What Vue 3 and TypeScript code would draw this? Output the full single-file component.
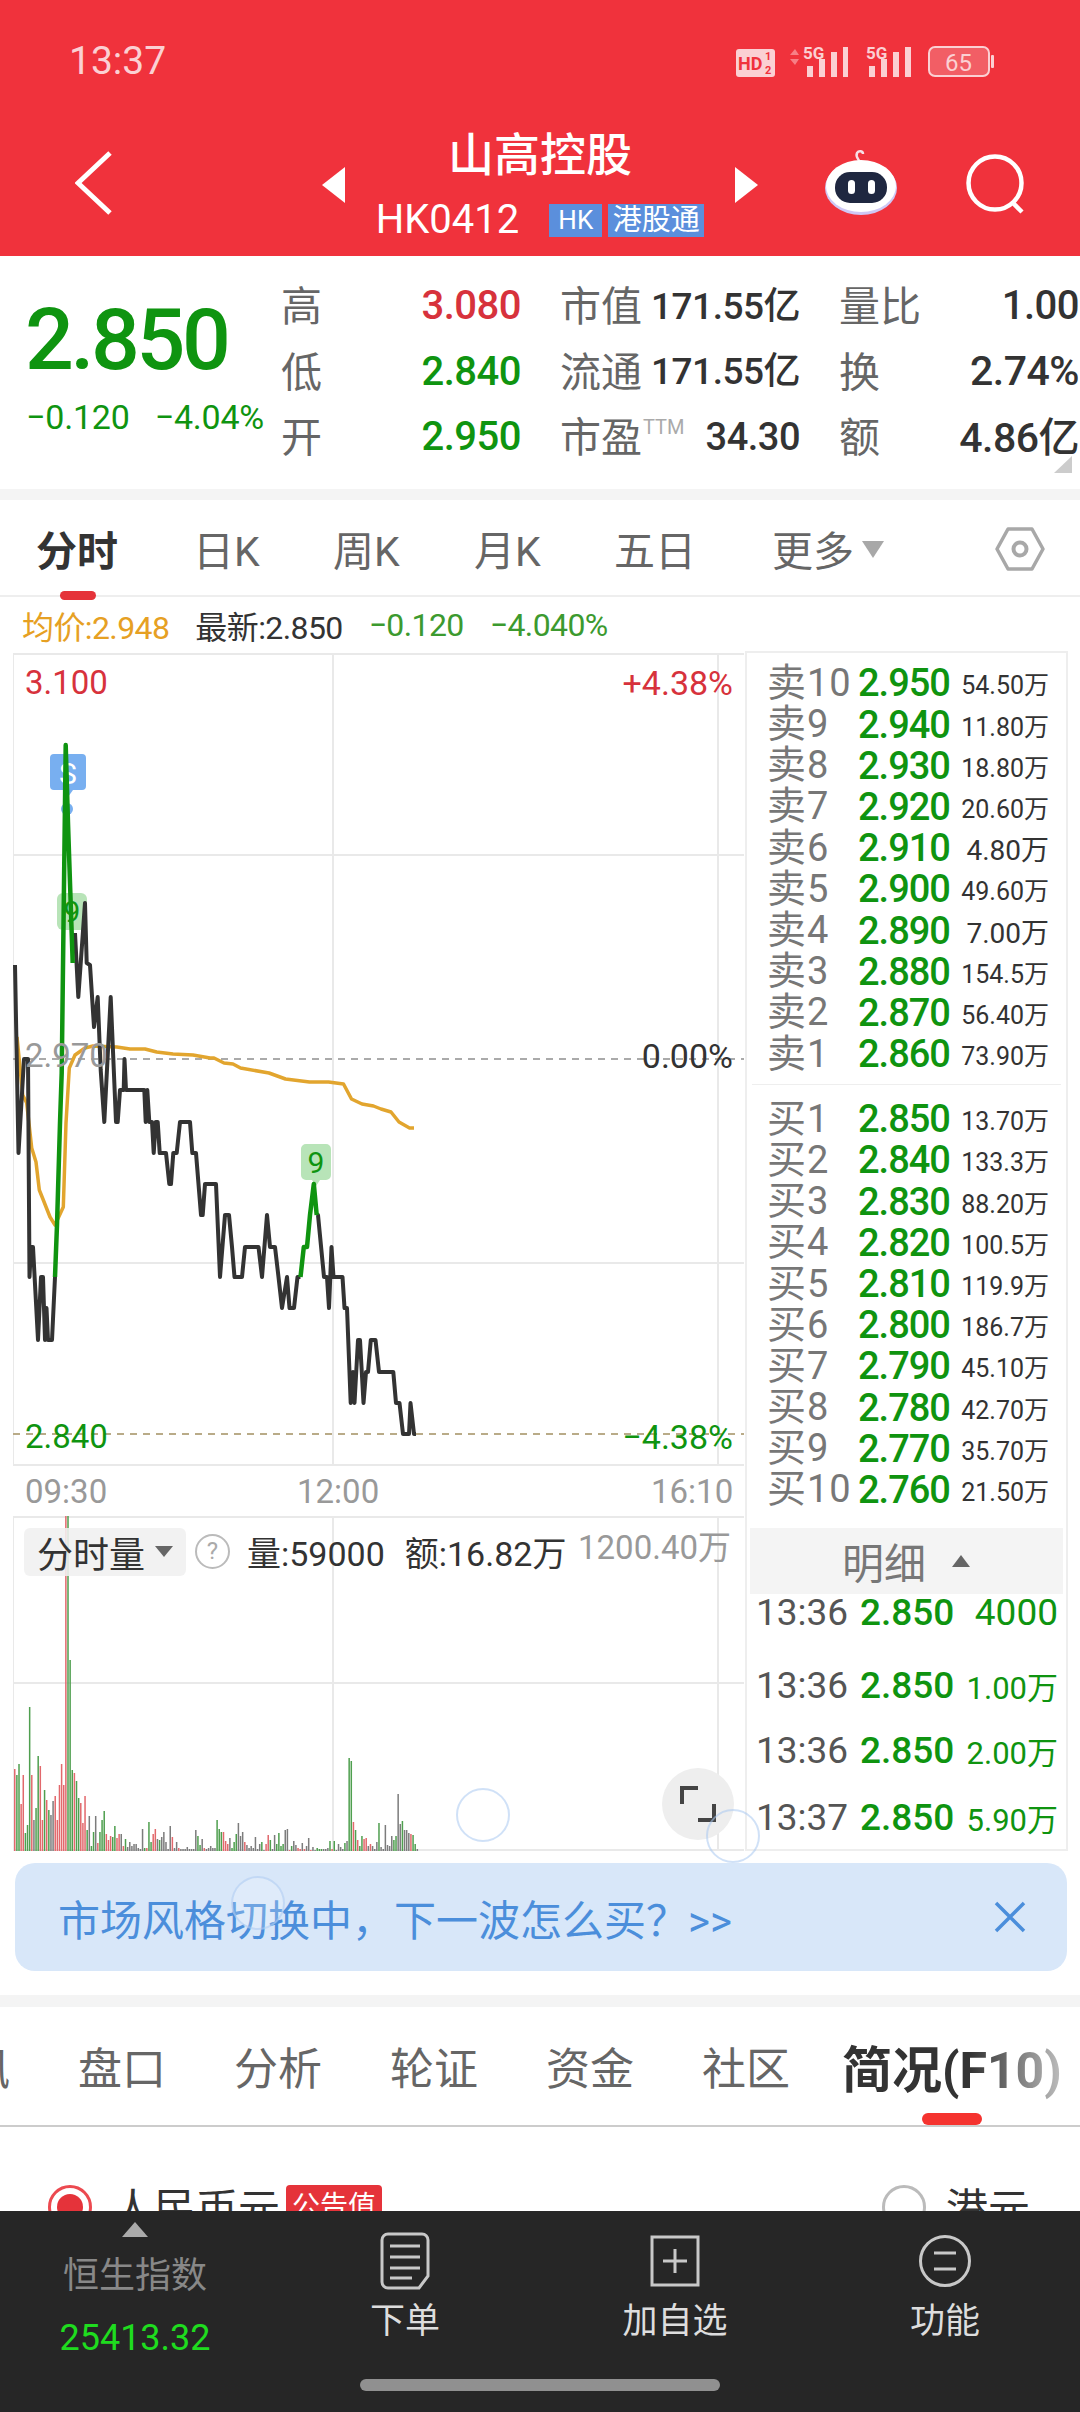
<template>
  <div class="app">
    <header class="top">
      <div class="status">
        <span class="clock">13:37</span>
        <svg class="status-icons" width="260" height="36" viewBox="736 44 260 36">
          <rect x="737" y="50" width="39" height="28" rx="3" fill="#fbd0d3" />
          <text x="739" y="71" class="hd">HD</text>
          <text x="766" y="61" class="hd-sub">1</text>
          <text x="766" y="75" class="hd-sub">2</text>
          <path d="M791 56l5-6 4 6zM791 60l5 6 4-6z" fill="#f77f86" />
          <text x="804" y="60" class="five">5G</text>
          <path d="M808 67h6v11h-6zM820 60h6v18h-6zM832 53h6v25h-6zM844 48h5v30h-5z" fill="#fbd0d3" />
          <text x="867" y="60" class="five">5G</text>
          <path d="M870 67h6v11h-6zM882 60h6v18h-6zM894 53h6v25h-6zM906 48h6v30h-6z" fill="#fbd0d3" />
          <rect x="930" y="48" width="60" height="29" rx="6" fill="#f25e65" stroke="#fbd0d3" stroke-width="2" />
          <text x="946" y="72" class="batt">65</text>
          <rect x="992" y="56" width="3" height="13" rx="1" fill="#fbd0d3" />
        </svg>
      </div>
      <nav class="nav">
        <div class="nav-left">
          <svg width="40" height="66" viewBox="0 0 40 66">
            <path d="M35 3L3 33l32 30" fill="none" stroke="#fff" stroke-width="5" />
          </svg>
        </div>
        <div class="nav-center">
          <i class="arrow-left"></i>
          <div class="name">
            <div class="title">山高控股</div>
            <div class="code">
              <span class="code-text">HK0412</span>
              <span class="tag tag-hk">HK</span>
              <span class="tag tag-gg">港股通</span>
            </div>
          </div>
          <i class="arrow-right"></i>
        </div>
        <div class="nav-right">
          <svg class="robot" width="72" height="68" viewBox="0 0 72 68">
            <path d="M35 15c-1-4-5-6-3-10 2-3 6-2 6 1" fill="none" stroke="#f6dfe6" stroke-width="2.5" />
            <ellipse cx="36" cy="40" rx="36" ry="27" fill="#cfc8f5" />
            <ellipse cx="36" cy="38" rx="35" ry="26" fill="#fff" />
            <rect x="10" y="24" width="52" height="31" rx="15" fill="#1f2740" />
            <rect x="23" y="32" width="7" height="14" rx="3.5" fill="#fff" />
            <rect x="43" y="32" width="7" height="14" rx="3.5" fill="#fff" />
          </svg>
          <svg class="search" width="62" height="60" viewBox="0 0 62 60">
            <circle cx="29" cy="29" r="26.5" fill="none" stroke="#fff" stroke-width="4.5" />
            <path d="M46 48l10 10" fill="none" stroke="#fff" stroke-width="4.5" />
          </svg>
        </div>
      </nav>
    </header>

    <section class="quote">
      <div class="quote-main">
        <div class="last-price">2.850</div>
        <div class="change"><span>−0.120</span><span>−4.04%</span></div>
      </div>
      <div class="quote-grid">
        <div v-for="item in quoteItems" :key="item.label" class="cell">
          <span class="cell-label">{{ item.label }}<sup v-if="item.ttm">TTM</sup></span>
          <span class="cell-value" :class="[item.tone, item.size]">{{ item.value }}</span>
        </div>
      </div>
      <i class="corner"></i>
    </section>

    <div class="tabs">
      <span v-for="tab in chartTabs" :key="tab.name" class="tab" :class="{ on: tab.name === '分时' }" :style="{ width: tab.width + 'px' }">{{ tab.name }}</span>
      <span class="tab more">更多<i class="more-caret"></i></span>
      <svg class="gear" width="52" height="48" viewBox="0 0 52 48">
        <path d="M3 24L14 4h24l11 20-11 20H14z" fill="none" stroke="#a8a8a8" stroke-width="3.5" stroke-linejoin="round" />
        <circle cx="26" cy="24" r="6.5" fill="none" stroke="#a8a8a8" stroke-width="4" />
      </svg>
    </div>

    <div class="legend">
      <span class="orange">均价:2.948</span>
      <span class="dark">最新:2.850</span>
      <span class="soft-green">−0.120</span>
      <span class="soft-green">−4.040%</span>
    </div>

    <main class="board">
      <div class="chart-col">
        <div class="price-chart">
          <svg class="layer" width="731" height="813" viewBox="13 653 731 813">
            <path d="M13 653V1466M333 653V1466M718 653V1466" class="grid-thin" />
            <path d="M13 654H744M13 855H744M13 1263H744M13 1465H744" class="grid" />
            <path d="M13 1059H744" class="dash-gray" />
            <path d="M13 1434H744" class="dash-tan" />
            <path d="M50 758a4 4 0 0 1 4-4h28a4 4 0 0 1 4 4v28a4 4 0 0 1-4 4H73l-5 7-5-7H54a4 4 0 0 1-4-4z" fill="#78aff0" />
            <circle cx="67" cy="809" r="6" fill="#78aff0" />
            <text x="68" y="784" class="mark white">S</text>
            <rect x="57" y="893" width="30" height="37" rx="6" fill="#b8e4b8" />
            <text x="72" y="922" class="mark green-fill">9</text>
            <path d="M301 1149a5 5 0 0 1 5-5h20a5 5 0 0 1 5 5v26a5 5 0 0 1-5 5h-6l-4 6-4-6h-6a5 5 0 0 1-5-5z" fill="#b8e4b8" />
            <text x="316" y="1173" class="mark green-fill">9</text>
            <polyline :points="avgLine" class="line-avg" />
            <polyline :points="blackA" class="line-dark" />
            <polyline :points="blackB" class="line-dark" />
            <polyline :points="blackC" class="line-dark" />
            <polyline :points="greenA" class="line-green" />
            <polyline :points="greenB" class="line-green" />
          </svg>
          <span class="axis left red-text at-top">3.100</span>
          <span class="axis right red-text at-top">+4.38%</span>
          <span class="axis left gray-text at-mid">2.970</span>
          <span class="axis right dark-text at-mid">0.00%</span>
          <span class="axis left green-text at-low">2.840</span>
          <span class="axis right green-text at-low">−4.38%</span>
        </div>
        <div class="time-axis"><span>09:30</span><span>12:00</span><span>16:10</span></div>
        <div class="volume-chart">
          <svg class="layer" width="731" height="335" viewBox="13 1516 731 335">
            <path d="M13 1516V1851M333 1516V1851M718 1516V1851" class="grid-thin" />
            <path d="M13 1517H744M13 1683H744M13 1850H744" class="grid" />
            <rect v-for="bar in bars" :key="bar.x" :x="bar.x" :y="1851 - bar.h" width="1.5" :height="bar.h" :fill="bar.fill" />
          </svg>
          <div class="vol-head">
            <span class="vol-select">分时量<i class="vol-caret"></i></span>
            <span class="help">?</span>
            <span class="vol-stat">量:59000</span>
            <span class="vol-stat">额:16.82万</span>
            <span class="vol-max">1200.40万</span>
          </div>
          <div class="expand">
            <svg width="36" height="36" viewBox="0 0 36 36">
              <path d="M2 18V2h16M34 18v16H18" fill="none" stroke="#444" stroke-width="4" />
            </svg>
          </div>
        </div>
      </div>

      <aside class="depth">
        <div class="levels">
          <div v-for="row in asks" :key="row.label" class="level">
            <span class="level-name">{{ row.side }}<b>{{ row.no }}</b></span>
            <span class="level-price">{{ row.price }}</span>
            <span class="level-vol" :class="{ wide: row.vol.length < 6 }">{{ row.vol }}</span>
          </div>
        </div>
        <div class="depth-line"></div>
        <div class="levels">
          <div v-for="row in bids" :key="row.label" class="level">
            <span class="level-name">{{ row.side }}<b>{{ row.no }}</b></span>
            <span class="level-price">{{ row.price }}</span>
            <span class="level-vol" :class="{ wide: row.vol.length < 6 }">{{ row.vol }}</span>
          </div>
        </div>
        <div class="detail-head">明细<i class="detail-caret"></i></div>
        <div class="tick-list">
          <div v-for="(tick, i) in ticks" :key="i" class="tick">
            <span class="tick-time">{{ tick.time }}</span>
            <span class="tick-price">{{ tick.price }}</span>
            <span class="tick-vol" :class="{ small: tick.vol.endsWith('万') }">{{ tick.vol }}</span>
          </div>
        </div>
      </aside>
    </main>

    <div class="banner">
      <span>市场风格切换中，下一波怎么买？&gt;&gt;</span>
      <svg width="32" height="32" viewBox="0 0 32 32">
        <path d="M2 2l28 28M30 2L2 30" fill="none" stroke="#4b8edb" stroke-width="3.5" />
      </svg>
    </div>

    <div class="strip"></div>

    <div class="info-tabs">
      <span class="info-cut">讯</span>
      <span v-for="name in infoTabs" :key="name" class="info-tab">{{ name }}</span>
      <span class="info-active">简况(F10)</span>
      <i class="info-fade"></i>
      <i class="info-mark"></i>
    </div>

    <div class="currency">
      <div class="currency-item">
        <i class="radio radio-on"></i>
        <span>人民币元</span>
        <em>公告值</em>
      </div>
      <div class="currency-item">
        <i class="radio"></i>
        <span>港元</span>
      </div>
    </div>

    <footer class="footer">
      <div class="index">
        <i class="index-caret"></i>
        <div class="index-name">恒生指数</div>
        <div class="index-value">25413.32</div>
      </div>
      <div class="action">
        <svg width="50" height="58" viewBox="0 0 50 58">
          <path d="M8 2h34a6 6 0 0 1 6 6v36l-9 12H8a6 6 0 0 1-6-6V8a6 6 0 0 1 6-6z" fill="none" stroke="#c8c8c8" stroke-width="3" />
          <path d="M10 14h30M10 25h30M10 36h30M10 46h22" stroke="#c8c8c8" stroke-width="3" />
        </svg>
        <span>下单</span>
      </div>
      <div class="action">
        <svg width="50" height="58" viewBox="0 0 50 58">
          <rect x="2" y="5" width="46" height="48" fill="none" stroke="#c8c8c8" stroke-width="3" />
          <path d="M25 17v24M13 29h24" stroke="#c8c8c8" stroke-width="3" />
        </svg>
        <span>加自选</span>
      </div>
      <div class="action">
        <svg width="52" height="58" viewBox="0 0 52 58">
          <circle cx="26" cy="29" r="24.5" fill="none" stroke="#c8c8c8" stroke-width="3" />
          <path d="M15 21h22M15 37h22" stroke="#c8c8c8" stroke-width="3" />
        </svg>
        <span>功能</span>
      </div>
      <i class="home-bar"></i>
    </footer>

    <i class="touch touch-a"></i>
    <i class="touch touch-b"></i>
    <i class="touch touch-c"></i>
  </div>
</template>

<script setup lang="ts">
const quoteItems = [
  { label: '高', value: '3.080', tone: 'red-text', size: 'mid' },
  { label: '市值', value: '171.55亿', tone: 'dark-text', size: 'tight raised' },
  { label: '量比', value: '1.00', tone: 'dark-text', size: 'mid' },
  { label: '低', value: '2.840', tone: 'green-text', size: 'mid' },
  { label: '流通', value: '171.55亿', tone: 'dark-text', size: 'tight raised' },
  { label: '换', value: '2.74%', tone: 'dark-text', size: 'big' },
  { label: '开', value: '2.950', tone: 'green-text', size: 'mid' },
  { label: '市盈', value: '34.30', tone: 'dark-text', size: '', ttm: true },
  { label: '额', value: '4.86亿', tone: 'dark-text', size: 'big raised' },
]

const chartTabs = [
  { name: '分时', width: 157 },
  { name: '日K', width: 140 },
  { name: '周K', width: 141 },
  { name: '月K', width: 140 },
  { name: '五日', width: 158 },
]

const infoTabs = ['盘口', '分析', '轮证', '资金', '社区']

const makeLevels = (side: string, rows: string[][]) =>
  rows.map(([no, price, vol]) => ({ label: side + no, side, no, price, vol }))

const asks = makeLevels('卖', [
  ['10', '2.950', '54.50万'],
  ['9', '2.940', '11.80万'],
  ['8', '2.930', '18.80万'],
  ['7', '2.920', '20.60万'],
  ['6', '2.910', '4.80万'],
  ['5', '2.900', '49.60万'],
  ['4', '2.890', '7.00万'],
  ['3', '2.880', '154.5万'],
  ['2', '2.870', '56.40万'],
  ['1', '2.860', '73.90万'],
])

const bids = makeLevels('买', [
  ['1', '2.850', '13.70万'],
  ['2', '2.840', '133.3万'],
  ['3', '2.830', '88.20万'],
  ['4', '2.820', '100.5万'],
  ['5', '2.810', '119.9万'],
  ['6', '2.800', '186.7万'],
  ['7', '2.790', '45.10万'],
  ['8', '2.780', '42.70万'],
  ['9', '2.770', '35.70万'],
  ['10', '2.760', '21.50万'],
])

const ticks = [
  { time: '13:36', price: '2.850', vol: '4000' },
  { time: '13:36', price: '2.850', vol: '1.00万' },
  { time: '13:36', price: '2.850', vol: '2.00万' },
  { time: '13:37', price: '2.850', vol: '5.90万' },
]

// line data, read off the screenshot in page pixels
const blackA = '15,965 18.5,1153 24,1059 28,1059 29.5,1277 31,1247 33,1247 38,1340 41,1277 43,1277 45,1340 46.5,1308 48,1340 52,1340 55,1277'
const greenA = '55,1277 57,1225 60,1123 61.7,1073 65.7,745 68,823 72.7,963'
const blackB = '75,933 78.3,997 85,903 86.7,963 90,965 94,1027 97.7,997 100.7,1070 104.3,1122 110.7,997 116,1122 117.7,1122 120,1090 123.7,1090 124.5,1059 126,1090 144.3,1090 145.7,1122 147.3,1090 149.3,1122 152,1122 153.7,1153 155.7,1122 157.7,1122 159.7,1153 166,1153 169.3,1184 171,1184 173.3,1153 176.7,1153 180,1122 190,1122 192.3,1153 196,1153 201,1215 202.7,1215 205,1184 216,1184 220,1277 225,1215 229,1215 232,1247 234.5,1277 242,1277 245,1247 258.5,1247 262,1277 267,1215 270,1247 275,1247 278.5,1277 282,1308 287,1277 289.5,1308 294,1308 297.5,1277 300.5,1277'
const greenB = '300.5,1277 303.8,1247 307,1247 310,1215 313.8,1184 316.7,1215'
const blackC = '316.7,1215 318,1215 324,1277 327,1277 329,1308 331.5,1247 333.5,1277 342.5,1277 344.5,1308 347,1308 350.7,1403 353,1372 354.5,1403 358,1340 360,1340 363.5,1403 366,1372 368,1372 370.8,1340 375.5,1340 379,1372 393.3,1372 396,1403 399.5,1403 403,1434 409,1434 410.5,1403 414,1434 416,1434'
const avgLine = '17,1037 22.7,1095 26.7,1103 31.7,1148 36,1162 39.3,1190 43.3,1200 50,1217 55,1225 63.3,1207 66,1123 69.3,1068 75,1055 85,1048 93,1046 116.7,1047 130,1049 145,1049 156.7,1052 173,1054 193,1055 210,1058 214,1058 224,1063 233,1064 240.5,1068 269,1073 285.5,1079 309.5,1082 328.5,1082 343.5,1084 351.5,1099 362,1104 373.5,1106 381,1109 391,1112 399,1122 409.5,1128 414,1128'

const barData =
  'r82 g76 g87 r47 r76 g18 g26 g144 r76 k31 g43 g95 r85 r31 g61 r51 g41 k36 k50 r55 r31 r66 r87 r66 r335 g335 g191 g81 r78 g70 g53 r48 r28 r55 g21 k35 g5 g19 k35 r8 g19 g31 g40 r17 r11 r15 g14 g25 r13 r17 k17 r5 g12 k4 k9 k5 k7 k7 k3 k2 k22 g3 r3 g29 g9 r17 r22 k12 g11 k14 k19 k9 k2 k25 r14 k3 k9 r3 k2 k2 k2 k4 k2 k2 k2 k21 g15 g6 k12 r3 k2 k3 k5 k3 k3 g31 g22 ' +
  'g19 r19 r10 r7 k13 g3 g9 g17 k28 k15 k19 r9 k6 k3 k5 k3 k14 k2 k7 g9 k1 r7 r16 g11 k2 k16 g7 g18 g5 g7 k21 k22 r1 g5 k10 k6 r3 r2 k8 r2 k5 k13 r1 k4 k1 g3 g2 g2 k2 k2 k3 g10 r2 g10 k1 k7 k4 k2 g8 k10 g93 g90 r29 g21 r11 g5 g15 r12 r13 k5 r7 k5 k2 k9 g28 k4 k2 k26 k6 k5 k15 g11 g15 k57 k27 g30 k21 k21 k18 r17 g16 g7 k2'

const barColors: Record<string, string> = { r: '#e2686c', g: '#4f9f4f', k: '#7c7c7c' }

const bars = barData.split(' ').map((item, i) => ({
  x: +(14 + i * 2.13).toFixed(2),
  h: Number(item.slice(1)),
  fill: barColors[item[0]],
}))
</script>

<style scoped>
.app {
  position: relative;
  display: flex;
  flex-direction: column;
  width: 1080px;
  height: 2412px;
  overflow: hidden;
  background: #fff;
  font-family: Roboto, "Noto Sans CJK SC", sans-serif;
  color: #333;
}

i {
  display: block;
  font-style: normal;
}

.top {
  height: 256px;
  flex: none;
  background: #f0323c;
  color: #fff;
}

.status {
  display: flex;
  align-items: center;
  justify-content: space-between;
  height: 122px;
  padding: 0 85px 0 69px;
}

.clock {
  font-size: 39px;
  color: #fbd0d3;
}

.status-icons text {
  font-family: Roboto, sans-serif;
}

.hd {
  font-size: 18px;
  font-weight: 700;
  fill: #f0323c;
}

.hd-sub {
  font-size: 11px;
  font-weight: 700;
  fill: #f0323c;
}

.five {
  font-size: 17px;
  font-weight: 700;
  fill: #fbd0d3;
}

.batt {
  font-size: 24px;
  fill: #fbd0d3;
}

.nav {
  display: grid;
  grid-template-columns: 322px 436px 322px;
}

.nav-left {
  padding: 28px 0 0 75px;
}

.nav-center {
  display: flex;
  justify-content: space-between;
}

.arrow-left,
.arrow-right {
  width: 0;
  height: 0;
  margin-top: 45px;
  border-top: 18px solid transparent;
  border-bottom: 18px solid transparent;
}

.arrow-left {
  border-right: 23px solid #fff;
}

.arrow-right {
  border-left: 23px solid #fff;
}

.name {
  display: flex;
  flex-direction: column;
  align-items: center;
  padding-top: 8px;
}

.title {
  height: 50px;
  font-size: 46px;
  font-weight: 500;
  line-height: 50px;
}

.code {
  display: flex;
  align-items: center;
  height: 34px;
  margin-top: 23px;
}

.code-text {
  margin-right: 30px;
  font-size: 40px;
  line-height: 34px;
}

.tag {
  height: 33px;
  margin-right: 6px;
  background: #5b8fdc;
  text-align: center;
  line-height: 33px;
}

.tag-hk {
  width: 53px;
  font-size: 26px;
}

.tag-gg {
  width: 96px;
  margin-right: 0;
  font-size: 29px;
}

.nav-right {
  display: flex;
  align-items: flex-start;
  padding-left: 67px;
}

.robot {
  margin-top: 26px;
}

.search {
  margin: 32px 0 0 69px;
}

.quote {
  position: relative;
  display: flex;
  flex: none;
  height: 233px;
  padding-top: 17px;
  box-sizing: border-box;
}

.quote-main {
  width: 281px;
  padding: 27px 0 0 25px;
  box-sizing: border-box;
}

.last-price {
  height: 80px;
  font-size: 86px;
  font-weight: 500;
  line-height: 80px;
  letter-spacing: -3.4px;
  color: #0f9410;
}

.change {
  display: flex;
  gap: 25px;
  margin-top: 20px;
  padding-left: 1px;
  font-size: 34px;
  line-height: 34px;
  letter-spacing: -0.2px;
  white-space: nowrap;
  color: #0f9410;
}

.quote-grid {
  display: grid;
  grid-template-columns: repeat(3, 240px);
  grid-auto-rows: 65.5px;
  column-gap: 39px;
}

.cell {
  display: flex;
  align-items: center;
  justify-content: space-between;
  white-space: nowrap;
}

.cell-label {
  margin-top: -5px;
  font-size: 41px;
  color: #666;
}

.cell-label sup {
  position: relative;
  top: -4px;
  margin-left: 1px;
  font-size: 20px;
  line-height: 0;
  color: #aaa;
  vertical-align: super;
}

.cell-value {
  font-size: 38px;
  font-weight: 500;
  letter-spacing: -0.5px;
}

.cell-value.tight {
  font-size: 37px;
}

.cell-value.mid {
  font-size: 40px;
}

.cell-value.big {
  font-size: 41px;
}

.cell-value.raised {
  margin-top: -6px;
}

.corner {
  position: absolute;
  right: 8px;
  bottom: 16px;
  width: 0;
  height: 0;
  border-bottom: 17px solid #ccc;
  border-left: 18px solid transparent;
}

.red-text {
  color: #d7323c;
}

.green-text {
  color: #0f9410;
}

.dark-text {
  color: #333;
}

.gray-text {
  color: #999;
}

.tabs {
  position: relative;
  display: flex;
  flex: none;
  align-items: center;
  height: 97px;
  margin-top: 11px;
  padding-left: 36px;
  border-bottom: 2px solid #eee;
  box-sizing: border-box;
  box-shadow: 0 -11px 0 #f4f4f4;
}

.tab {
  flex: none;
  font-size: 41px;
  color: #666;
}

.tab.on {
  position: relative;
  font-weight: 700;
  color: #333;
}

.tab.on::after {
  content: "";
  position: absolute;
  left: 24px;
  bottom: -22px;
  width: 36px;
  height: 9px;
  border-radius: 5px;
  background: #e5333a;
}

.more {
  display: flex;
  align-items: center;
}

.more-caret {
  width: 0;
  height: 0;
  margin: 3px 0 0 8px;
  border-top: 17px solid #a8a8a8;
  border-left: 11px solid transparent;
  border-right: 11px solid transparent;
}

.gear {
  position: absolute;
  left: 994px;
  top: 25px;
}

.legend {
  display: flex;
  flex: none;
  align-items: center;
  gap: 26px;
  height: 54px;
  padding: 2px 0 0 22px;
  box-sizing: border-box;
  font-size: 32px;
  letter-spacing: -0.6px;
}

.orange {
  color: #e6a023;
}

.dark {
  color: #333;
}

.soft-green {
  color: #3c9a2f;
}

.board {
  display: flex;
  flex: none;
  padding-left: 13px;
}

.chart-col {
  position: relative;
  width: 731px;
  padding-top: 2px;
}

.price-chart {
  position: relative;
  height: 813px;
}

.layer {
  position: absolute;
  left: 0;
  top: 0;
}

.grid {
  fill: none;
  stroke: #e9e9e9;
  stroke-width: 2;
}

.grid-thin {
  fill: none;
  stroke: #e2e2e2;
  stroke-width: 1.5;
}

.dash-gray {
  fill: none;
  stroke: #aaa;
  stroke-width: 2;
  stroke-dasharray: 7 6;
}

.dash-tan {
  fill: none;
  stroke: #b9ab88;
  stroke-width: 2;
  stroke-dasharray: 7 6;
}

.line-dark,
.line-green,
.line-avg {
  fill: none;
  stroke-linejoin: round;
}

.line-dark {
  stroke: #333;
  stroke-width: 4;
}

.line-green {
  stroke: #0f9410;
  stroke-width: 4.5;
}

.line-avg {
  stroke: #e2a52e;
  stroke-width: 3.5;
}

.mark {
  font-family: Roboto, sans-serif;
  font-size: 30px;
  text-anchor: middle;
}

.white {
  fill: #fff;
}

.green-fill {
  fill: #0f9410;
}

.axis {
  position: absolute;
  font-size: 34px;
  line-height: 40px;
}

.axis.left {
  left: 12px;
  font-size: 33px;
}

.axis.right {
  right: 11px;
}

.at-top {
  top: 10px;
}

.at-mid {
  top: 383px;
}

.at-low {
  top: 764px;
}

.time-axis {
  display: grid;
  grid-template-columns: 272px 354px auto;
  align-items: center;
  height: 50px;
  padding-left: 12px;
  font-size: 33px;
  color: #999;
}

.volume-chart {
  position: relative;
  height: 335px;
}

.vol-head {
  position: relative;
  display: flex;
  align-items: center;
  padding: 11px 0 0 11px;
}

.vol-select {
  display: flex;
  align-items: center;
  width: 162px;
  height: 48px;
  padding-left: 13px;
  box-sizing: border-box;
  border-radius: 6px;
  background: rgba(240, 240, 240, 0.88);
  font-size: 36px;
}

.vol-caret {
  width: 0;
  height: 0;
  margin-left: 10px;
  border-top: 11px solid #666;
  border-left: 9px solid transparent;
  border-right: 9px solid transparent;
}

.help {
  width: 31px;
  height: 31px;
  margin: 0 17px 0 9px;
  border: 2.5px solid #bbb;
  border-radius: 50%;
  font-size: 24px;
  line-height: 31px;
  text-align: center;
  color: #aaa;
}

.vol-stat {
  margin-right: 20px;
  font-size: 34px;
  white-space: nowrap;
}

.vol-max {
  position: absolute;
  right: 13px;
  top: 5px;
  font-size: 33px;
  color: #999;
  white-space: nowrap;
}

.expand {
  position: absolute;
  left: 649px;
  top: 252px;
  display: flex;
  align-items: center;
  justify-content: center;
  width: 72px;
  height: 72px;
  border-radius: 50%;
  background: #eee;
}

.depth {
  width: 323px;
  height: 1200px;
  margin-left: 1px;
  border: 2px solid #eee;
  box-sizing: border-box;
  padding-top: 8.4px;
}

.level {
  display: grid;
  grid-template-columns: 91px 97px 94px;
  align-items: center;
  height: 41.2px;
  padding-left: 20px;
  white-space: nowrap;
}

.level-name {
  display: flex;
  align-items: center;
  font-size: 39px;
  line-height: 41px;
  color: #777;
}

.level-name b {
  margin-left: 1px;
  font-size: 38px;
  font-weight: 400;
  letter-spacing: 1px;
}

.level-price {
  font-size: 38px;
  font-weight: 500;
  letter-spacing: -1px;
  color: #0f9410;
}

.level-vol {
  font-size: 25px;
  text-align: right;
  color: #333;
}

.level-vol.wide {
  font-size: 28px;
}

.depth-line {
  height: 1px;
  margin: 10.6px 5px 12.4px;
  background: #eee;
}

.detail-head {
  position: relative;
  display: flex;
  align-items: center;
  height: 66px;
  margin: 18.6px 3px 0;
  padding-left: 92px;
  background: #f4f4f4;
  font-size: 42px;
  color: #777;
}

.detail-caret {
  width: 0;
  height: 0;
  margin-left: 26px;
  border-bottom: 12px solid #666;
  border-left: 9px solid transparent;
  border-right: 9px solid transparent;
}

.tick {
  display: grid;
  grid-template-columns: 104px 92px 106px;
  align-items: center;
  height: 38px;
  margin-top: 29px;
  padding-left: 9px;
  white-space: nowrap;
  font-size: 37px;
}

.tick:nth-child(1) {
  margin-top: -3px;
}

.tick:nth-child(2) {
  margin-top: 34px;
}

.tick:nth-child(3) {
  margin-top: 27px;
}

.tick-time {
  color: #555;
}

.tick-price {
  font-weight: 500;
  color: #0f9410;
}

.tick-vol {
  text-align: right;
  color: #0f9410;
}

.tick-vol.small {
  font-size: 31px;
}

.banner {
  display: flex;
  flex: none;
  align-items: center;
  justify-content: space-between;
  height: 108px;
  margin: 12px 13px 24px 15px;
  padding: 0 41px 0 43px;
  border-radius: 20px;
  background: #d8e7f9;
  font-size: 42px;
  color: #4b8edb;
  white-space: nowrap;
}

.strip {
  flex: none;
  height: 12px;
  background: #f4f4f4;
}

.info-tabs {
  position: relative;
  display: flex;
  flex: none;
  align-items: center;
  height: 120px;
  border-bottom: 2px solid #ccc;
  box-sizing: border-box;
  white-space: nowrap;
  overflow: hidden;
}

.info-cut {
  width: 10px;
  margin-right: 68px;
  font-size: 44px;
  color: #666;
  direction: rtl;
  overflow: hidden;
}

.info-tab {
  width: 88px;
  margin-right: 68px;
  font-size: 44px;
  color: #666;
}

.info-active {
  margin-left: -16px;
  font-size: 50px;
  font-weight: 700;
  color: #333;
}

.info-fade {
  position: absolute;
  right: 0;
  top: 0;
  width: 110px;
  height: 100px;
  background: linear-gradient(to right, rgba(255, 255, 255, 0), rgba(255, 255, 255, 0.82));
}

.info-mark {
  position: absolute;
  left: 922px;
  bottom: 0;
  width: 60px;
  height: 12px;
  border-radius: 6px;
  background: #f5332f;
}

.currency {
  display: flex;
  flex: none;
  justify-content: space-between;
  height: 84px;
  padding: 58px 50px 0 48px;
  box-sizing: border-box;
  overflow: hidden;
}

.currency-item {
  display: flex;
  align-items: flex-start;
  height: 60px;
  font-size: 42px;
  line-height: 50px;
  color: #333;
}

.currency-item em {
  height: 44px;
  margin-left: 6px;
  padding: 0 6px;
  border-radius: 4px;
  background: #e5333a;
  font-size: 28px;
  font-style: normal;
  line-height: 44px;
  color: #fff;
}

.radio {
  width: 44px;
  height: 44px;
  margin-right: 20px;
  border: 3px solid #bbb;
  border-radius: 50%;
  box-sizing: border-box;
}

.radio-on {
  position: relative;
  border-color: #ec4a50;
}

.radio-on::after {
  content: "";
  position: absolute;
  left: 6px;
  top: 6px;
  width: 26px;
  height: 26px;
  border-radius: 50%;
  background: #e5333a;
}

.footer {
  position: relative;
  display: grid;
  flex: none;
  grid-template-columns: repeat(4, 270px);
  height: 201px;
  background: #262626;
}

.index {
  display: flex;
  flex-direction: column;
  align-items: center;
  padding-top: 11px;
}

.index-caret {
  width: 0;
  height: 0;
  border-bottom: 15px solid #aaa;
  border-left: 13px solid transparent;
  border-right: 13px solid transparent;
}

.index-name {
  margin-top: 17px;
  font-size: 36px;
  line-height: 44px;
  color: #888;
}

.index-value {
  margin-top: 20px;
  font-size: 36px;
  line-height: 40px;
  color: #1fdc1f;
}

.action {
  display: flex;
  flex-direction: column;
  align-items: center;
  padding-top: 21px;
  font-size: 35px;
  color: #ddd;
}

.action span {
  margin-top: 7px;
  line-height: 50px;
}

.home-bar {
  position: absolute;
  left: 360px;
  top: 168px;
  width: 360px;
  height: 12px;
  border-radius: 6px;
  background: #909090;
}

.touch {
  position: absolute;
  width: 54px;
  height: 54px;
  box-sizing: border-box;
  border: 2.5px solid rgba(170, 200, 240, 0.55);
  border-radius: 50%;
}

.touch-a {
  left: 456px;
  top: 1788px;
}

.touch-b {
  left: 706px;
  top: 1809px;
}

.touch-c {
  left: 231px;
  top: 1876px;
  background: rgba(255, 255, 255, 0.2);
}
</style>
